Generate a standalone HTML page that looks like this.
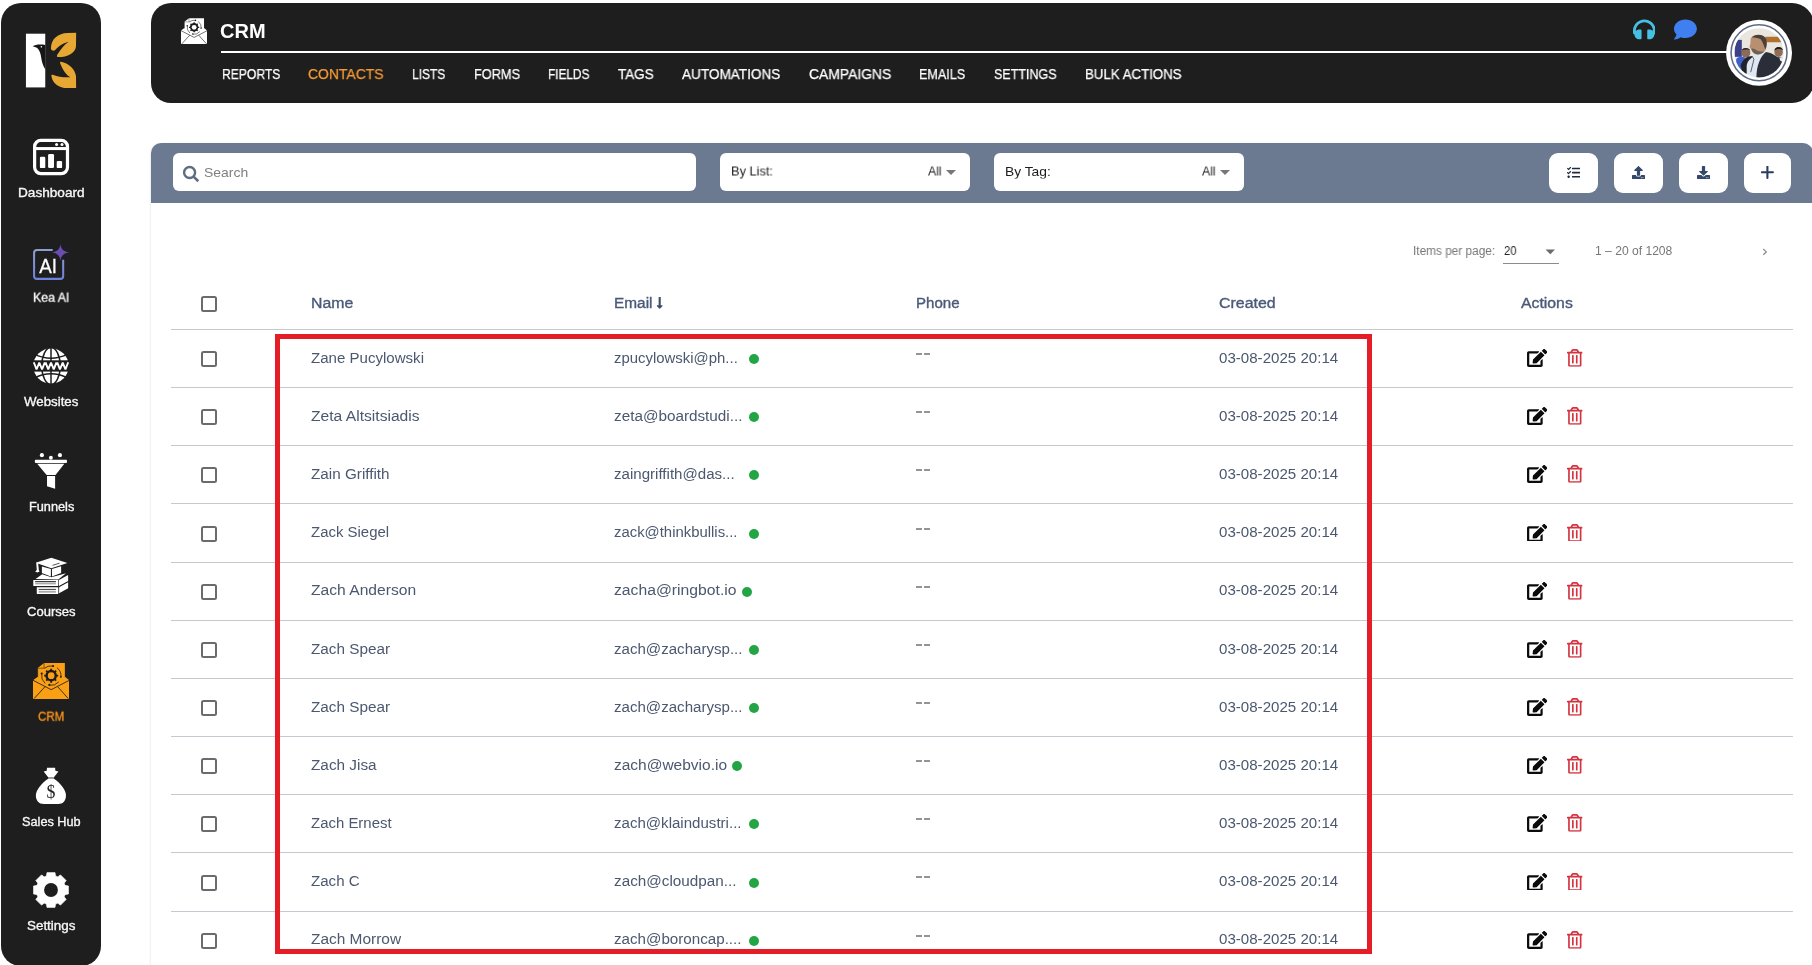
<!DOCTYPE html>
<html lang="en">
<head>
<meta charset="utf-8">
<title>CRM - Contacts</title>
<style>
*{box-sizing:border-box;margin:0;padding:0}
html,body{width:1812px;height:965px;overflow:hidden;background:#fff;font-family:"Liberation Sans",sans-serif}
body{position:relative}
.abs{position:absolute}
.t{position:absolute;white-space:nowrap;line-height:1;transform:translateY(-50%);transform-origin:0 50%;display:inline-block;will-change:transform}
#side{position:absolute;left:1px;top:3px;width:100px;height:963px;background:#1f1e1e;border-radius:20px}
#head{position:absolute;left:151px;top:3px;width:1663px;height:99.700px;background:#1f1e1e;border-radius:20px 22px 22px 20px}
#hline{position:absolute;left:221px;top:51px;width:1506px;height:2px;background:#fff}
#card{position:absolute;left:151px;top:143px;width:1665px;height:830px;background:#fff;border-radius:10px;box-shadow:-1px 0 2px rgba(0,0,0,.07)}
#tool{position:absolute;left:151px;top:143px;width:1662px;height:59.500px;background:#6b7a90;border-radius:10px 10px 0 0}
.inp{position:absolute;top:153px;height:38px;background:#fff;border-radius:6px}
.btn{position:absolute;top:153px;height:40px;width:49px;background:#fff;border-radius:9px}
.ln{position:absolute;left:171px;width:1622px;height:1px;background:#c7c9d1}
.cb{position:absolute;left:201px;width:16px;height:16px;border:2px solid #6b6b6b;border-radius:2.5px;background:#fff}
.dot{position:absolute;width:10px;height:10px;border-radius:50%;background:#23a546}
.ed{position:absolute;left:1526.7px;width:20.2px;height:17.9px;fill:#0b0b0b}
.tr{position:absolute;left:1567px;width:15.6px;height:17.8px;fill:#d4333f}
#red{position:absolute;left:275px;top:334px;width:1097px;height:620px;border:5px solid #e51d27}
.ds{position:absolute;width:6px;height:2px;background:#949494}
.hd{-webkit-text-stroke:0.35px #4a5a78}
.nv{-webkit-text-stroke:0.25px}
.sl{-webkit-text-stroke:0.35px}
.caret{position:absolute;width:0;height:0;border-left:5px solid transparent;border-right:5px solid transparent;border-top:5px solid #777}
</style>
</head>
<body>
<svg width="0" height="0" style="position:absolute">
<defs>
<symbol id="i-edit" viewBox="0 0 576 512"><path d="M402.6 83.2l90.2 90.2c3.8 3.8 3.8 10 0 13.800L274.400 405.600l-92.800 10.300c-12.400 1.400-22.900-9.100-21.500-21.500l10.300-92.800L388.800 83.200c3.800-3.800 10-3.800 13.800 0zm162-22.900l-48.800-48.800c-15.200-15.200-39.900-15.200-55.200 0l-35.400 35.400c-3.800 3.800-3.800 10 0 13.800l90.200 90.200c3.800 3.800 10 3.800 13.800 0l35.400-35.400c15.200-15.300 15.200-40 0-55.200zM384 346.200V448H64V128h229.800c3.200 0 6.200-1.300 8.500-3.500l40-40c7.600-7.600 2.200-20.500-8.500-20.500H48C21.500 64 0 85.500 0 112v352c0 26.500 21.500 48 48 48h352c26.500 0 48-21.500 48-48V306.200c0-10.700-12.900-16-20.500-8.500l-40 40c-2.200 2.300-3.500 5.300-3.500 8.500z"/></symbol>
<symbol id="i-trash" viewBox="0 0 448 512"><path d="M268 416h24a12 12 0 0 0 12-12V188a12 12 0 0 0-12-12h-24a12 12 0 0 0-12 12v216a12 12 0 0 0 12 12zM432 80h-82.410l-34-56.700A48 48 0 0 0 274.410 0H173.590a48 48 0 0 0-41.160 23.300L98.410 80H16A16 16 0 0 0 0 96v16a16 16 0 0 0 16 16h16v336a48 48 0 0 0 48 48h288a48 48 0 0 0 48-48V128h16a16 16 0 0 0 16-16V96a16 16 0 0 0-16-16zM171.840 50.910A6 6 0 0 1 177 48h94a6 6 0 0 1 5.150 2.910L293.610 80H154.390zM368 464H80V128h288zm-212-48h24a12 12 0 0 0 12-12V188a12 12 0 0 0-12-12h-24a12 12 0 0 0-12 12v216a12 12 0 0 0 12 12z"/></symbol>
<g id="i-crm">
<path fill="currentColor" d="M212 240 L330 146 H716 V400 L800 465 V815 H125 V465 L212 400Z"/>
<g stroke="#1f1e1e" stroke-width="16" fill="none" stroke-linecap="round">
<path d="M130 468 L462 640 L796 468"/>
<path d="M150 800 L345 588"/><path d="M775 800 L585 588"/>
<path d="M212 400 V242 L330 242 V150" stroke-width="10"/>
</g>
<circle cx="462" cy="380" r="108" fill="#1f1e1e"/>
<g stroke="#1f1e1e" stroke-width="34" stroke-linecap="butt">
<path d="M462 250 V510 M332 380 H592 M370 288 L554 472 M554 288 L370 472"/>
</g>
<circle cx="462" cy="380" r="62" fill="currentColor"/>
<g stroke="#1f1e1e" stroke-width="15" fill="none" stroke-linecap="round">
<path d="M340 240 A185 185 0 0 1 480 200"/>
<path d="M575 235 A185 185 0 0 1 645 400"/>
<path d="M600 500 A185 185 0 0 1 440 560"/>
<path d="M345 520 A185 185 0 0 1 285 350"/>
</g>
<g fill="#1f1e1e"><circle cx="497" cy="203" r="20"/><circle cx="287" cy="340" r="20"/><circle cx="428" cy="552" r="20"/><path d="M620 420 L665 410 L640 372Z"/></g>
</g>
</defs>
</svg>

<div id="side"></div>
<div id="head"></div>
<div id="hline"></div>
<div id="card"></div>
<div id="tool"></div>
<div class="inp" style="left:173px;width:523px"></div>
<div class="inp" style="left:719.500px;width:250.500px"></div>
<div class="inp" style="left:994px;width:250px"></div>
<div class="btn" style="left:1549px"></div>
<div class="btn" style="left:1614px"></div>
<div class="btn" style="left:1679px"></div>
<div class="btn" style="left:1744px;width:47px"></div>
<div class="caret" style="left:946px;top:170px"></div>
<div class="caret" style="left:1220px;top:170px"></div>

<!-- logo -->
<svg class="abs" style="left:16px;top:24px" width="70" height="72" viewBox="0 0 938 965">
<rect x="133" y="130" width="259" height="720" fill="#fff"/>
<path fill="#e7a833" d="M468 325 C470 195 565 122 690 119 L806 117 L804 300 C790 392 700 442 562 442 C540 440 548 418 562 398 C600 340 645 280 705 238 C620 258 562 308 522 352 C500 368 468 352 468 325Z"/>
<path fill="#e7a833" d="M474 692 C490 802 582 856 682 859 L806 859 L804 700 C792 600 702 520 602 505 C585 503 590 525 600 545 C630 620 672 682 728 713 C642 722 562 702 502 682 C486 676 472 678 474 692Z"/>
<path fill="#171616" d="M222 298 C262 278 305 268 394 280 L394 610 C362 565 346 505 336 442 C330 382 302 332 272 316 C252 306 236 302 222 298Z"/>
<circle cx="340" cy="306" r="11" fill="#e8e8e8"/>
</svg>
<!-- dashboard -->
<svg class="abs" style="left:26px;top:131px" width="50" height="52" viewBox="0 0 928 965">
<rect x="160" y="175" width="610" height="615" rx="115" fill="none" stroke="#fff" stroke-width="60"/>
<rect x="160" y="298" width="610" height="56" fill="#fff"/>
<circle cx="568" cy="252" r="28" fill="#fff"/><circle cx="668" cy="252" r="28" fill="#fff"/>
<rect x="258" y="480" width="100" height="208" rx="22" fill="#fff"/>
<rect x="410" y="425" width="110" height="263" rx="26" fill="#fff"/>
<rect x="570" y="555" width="100" height="133" rx="22" fill="#fff"/>
</svg>
<!-- kea ai -->
<svg class="abs" style="left:26px;top:236px;will-change:transform" width="50" height="52" viewBox="0 0 928 965">
<defs><linearGradient id="kg" x1="0" y1="0" x2="0" y2="1"><stop offset="0" stop-color="#8d9fcc"/><stop offset="1" stop-color="#6e82dc"/></linearGradient></defs>
<path d="M495 259 H205 Q150 259 150 315 V742 Q150 796 205 796 H636 Q690 796 690 742 V440" fill="none" stroke="url(#kg)" stroke-width="38"/>
<path fill="#6a4db4" d="M640 150 C652 250 700 292 800 305 C700 318 652 360 640 458 C628 360 580 318 480 305 C580 292 628 250 640 150Z"/>
<text x="410" y="685" font-family="Liberation Sans, sans-serif" font-size="385" font-weight="400" fill="#fff" stroke="#fff" stroke-width="5" text-anchor="middle" textLength="330" lengthAdjust="spacingAndGlyphs">AI</text>
</svg>
<!-- websites -->
<svg class="abs" style="left:33px;top:348px" width="36" height="36" viewBox="0 0 36 36">
<circle cx="18" cy="18" r="17.700" fill="#fff"/>
<g stroke="#1f1e1e" stroke-width="1.500" fill="none">
<line x1="18" y1="0" x2="18" y2="36"/>
<ellipse cx="18" cy="18" rx="9.200" ry="18.500"/>
<path d="M1 5.800 Q18 14.600 35 5.800"/>
<path d="M1 30.200 Q18 21.400 35 30.200"/>
</g>
<rect x="-2" y="12.300" width="40" height="11.300" fill="#1f1e1e"/>
<path d="M0.80 14.3 L3.55 21.4 L6.30 14.6 L9.05 21.4 L11.80 14.3 M12.50 14.3 L15.25 21.4 L18.00 14.6 L20.75 21.4 L23.50 14.3 M24.20 14.3 L26.95 21.4 L29.70 14.6 L32.45 21.4 L35.20 14.3" fill="none" stroke="#fff" stroke-width="1.9" stroke-linejoin="miter" stroke-miterlimit="2"/>
</svg>
<!-- funnels -->
<svg class="abs" style="left:26px;top:445px" width="50" height="52" viewBox="0 0 928 965">
<g fill="#fff">
<circle cx="295" cy="188" r="38"/><circle cx="630" cy="188" r="38"/><circle cx="462" cy="236" r="36"/>
<rect x="165" y="272" width="595" height="64" rx="14"/>
<path d="M208 350 H712 L548 556 H382Z"/>
<path d="M390 574 H540 V810 L390 765Z"/>
</g>
</svg>
<!-- courses -->
<svg class="abs" style="left:26px;top:550px" width="50" height="52" viewBox="0 0 928 965">
<g fill="#fff">
<path d="M180 238 L470 143 L768 240 L470 338Z"/>
<path d="M295 308 L462 352 V490 L295 425Z"/>
<path d="M482 352 L652 300 V425 L482 490Z"/>
<path d="M190 238 L225 238 L238 372 L252 400 L210 418 L170 400 L200 372Z"/>
<path d="M178 538 L300 452 L470 505 L742 430 L600 548Z"/>
<rect x="135" y="555" width="465" height="112" rx="8"/>
<path d="M612 555 L782 462 V575 L612 667Z"/>
<rect x="200" y="690" width="400" height="126" rx="8"/>
<path d="M615 690 L782 598 V712 L615 802Z"/>
</g>
<path d="M492 285 L622 245" stroke="#1f1e1e" stroke-width="14"/>
<rect x="170" y="578" width="385" height="16" fill="#1f1e1e"/>
<rect x="170" y="602" width="385" height="36" fill="#a9a9a9"/>
<rect x="235" y="722" width="320" height="16" fill="#1f1e1e"/>
<rect x="235" y="758" width="320" height="34" fill="#a9a9a9"/>
</svg>
<!-- crm -->
<svg class="abs" style="left:32.700px;top:662.800px;color:#fb9f14" width="36.400" height="36.100" viewBox="125 145 675 670"><use href="#i-crm"/></svg>
<!-- sales hub -->
<svg class="abs" style="left:26px;top:760px;will-change:transform" width="50" height="52" viewBox="0 0 928 965">
<path fill="#fff" d="M390 145 H540 L545 200 L602 214 L522 316 H408 L328 214 L385 200Z"/>
<rect x="410" y="320" width="112" height="20" fill="#bdbdbd"/>
<path fill="#fff" d="M418 345 H512 C640 430 745 560 742 660 C740 760 690 817 600 817 H330 C240 817 185 760 183 660 C182 560 290 430 418 345Z"/>
<text x="465" y="705" font-family="Liberation Serif, serif" font-size="330" fill="#1f1e1e" text-anchor="middle">$</text>
</svg>
<!-- settings -->
<svg class="abs" style="left:32.900px;top:871.750px" width="36" height="36" viewBox="0 0 37 37">
<path fill="#fff" d="M13.93 4.00 L14.38 0.67 L22.62 0.67 L23.07 4.00 L25.52 5.02 L28.20 2.98 L34.02 8.80 L31.98 11.48 L33.00 13.93 L36.33 14.38 L36.33 22.62 L33.00 23.07 L31.98 25.52 L34.02 28.20 L28.20 34.02 L25.52 31.98 L23.07 33.00 L22.62 36.33 L14.38 36.33 L13.93 33.00 L11.48 31.98 L8.80 34.02 L2.98 28.20 L5.02 25.52 L4.00 23.07 L0.67 22.62 L0.67 14.38 L4.00 13.93 L5.02 11.48 L2.98 8.80 L8.80 2.98 L11.48 5.02Z" stroke="#fff" stroke-width="0.800" stroke-linejoin="round"/>
<circle cx="18.500" cy="18.500" r="7.100" fill="#1f1e1e"/>
</svg>

<svg class="abs" style="left:180.900px;top:17.800px;color:#fff" width="26.300" height="26.400" viewBox="125 145 675 670"><use href="#i-crm"/></svg>
<svg class="abs" style="left:1632.600px;top:18.400px" width="22.800" height="22.800" viewBox="0 0 512 512"><path fill="#45bfe3" d="M256 32C114.520 32 0 146.496 0 288v48a32 32 0 0 0 17.689 28.622l14.383 7.191C34.083 431.903 83.421 480 144 480h24c13.255 0 24-10.745 24-24V280c0-13.255-10.745-24-24-24h-24c-31.342 0-59.671 12.879-80 33.627V288c0-105.869 86.131-192 192-192s192 86.131 192 192v1.627C427.671 268.879 399.342 256 368 256h-24c-13.255 0-24 10.745-24 24v176c0 13.255 10.745 24 24 24h24c60.579 0 109.917-48.098 111.928-108.187l14.382-7.191A32 32 0 0 0 512 336v-48c0-141.479-114.496-256-256-256z"/></svg>
<svg class="abs" style="left:1674.200px;top:18.300px" width="22.900" height="22.900" viewBox="0 0 512 512"><path fill="#3f7ff0" d="M256 32C114.600 32 0 125.100 0 240c0 49.600 21.400 95 57 130.700C44.500 421.100 2.700 466 2.200 466.500c-2.200 2.300-2.800 5.700-1.500 8.700S4.800 480 8 480c66.300 0 116-31.800 140.600-51.400 32.700 12.300 69 19.400 107.400 19.400 141.400 0 256-93.100 256-208S397.400 32 256 32z"/></svg>
<!-- avatar -->
<svg class="abs" style="left:1720px;top:14px" width="78" height="78" viewBox="0 0 965 965">
<defs><filter id="avb" x="-5%" y="-5%" width="110%" height="110%"><feGaussianBlur stdDeviation="7"/></filter><clipPath id="avc"><circle cx="483" cy="480" r="305"/></clipPath></defs>
<circle cx="483" cy="480" r="408" fill="#fff"/>
<circle cx="483" cy="480" r="346" fill="none" stroke="#5f6b84" stroke-width="19"/>
<g clip-path="url(#avc)"><g filter="url(#avb)">
<rect x="150" y="150" width="680" height="680" fill="#e9e6df"/>
<path d="M560 280 H800 V350 H570Z" fill="#b0702f"/>
<rect x="180" y="320" width="90" height="210" fill="#3a3f8a"/>
<path d="M200 560 C230 520 300 520 330 560 L340 700 H200Z" fill="#3b5fd0"/>
<ellipse cx="320" cy="480" rx="55" ry="60" fill="#8a6a58"/>
<path d="M270 450 C280 410 350 410 375 450 C350 435 300 435 270 450Z" fill="#2a2422"/>
<path d="M255 640 C275 560 340 520 400 520 L380 800 H300Z" fill="#20242c"/>
<ellipse cx="725" cy="470" rx="52" ry="62" fill="#8f6c55"/>
<path d="M672 455 C672 395 770 390 780 450 C750 425 700 425 672 455Z" fill="#1f1b1a"/>
<path d="M650 560 C700 520 770 530 800 560 V760 H650Z" fill="#23262e"/>
<path d="M735 545 L790 530 L780 580 L745 590Z" fill="#e8ecef"/>
<path d="M330 640 C340 560 420 510 520 480 L560 480 L470 790 H330Z" fill="#dfe7f0"/>
<path d="M395 520 L420 560 L380 720" stroke="#30405e" stroke-width="10" fill="none"/>
<path d="M450 790 C450 640 500 520 570 470 C640 480 720 520 760 600 L740 800Z" fill="#2a2f37"/>
<path d="M380 300 C420 240 540 250 570 310 C590 360 580 420 560 450 C540 490 500 500 460 500 C420 500 395 470 385 430 C360 420 365 390 375 370Z" fill="#b98f72"/>
<path d="M395 290 C430 240 545 245 572 310 C585 360 575 410 560 440 C545 400 530 340 500 310 C460 290 420 295 395 290Z" fill="#4a4038"/>
<path d="M385 430 C400 470 430 500 470 500 C500 500 530 485 548 460 C520 470 470 465 440 440 C420 430 400 425 385 430Z" fill="#6b6157"/>
</g></g>
</svg>

<!-- search icon -->
<svg class="abs" style="left:180px;top:163px" width="22" height="22" viewBox="0 0 22 22"><circle cx="9.600" cy="9.500" r="5.500" fill="none" stroke="#5d6d82" stroke-width="2.400"/><path d="M13.600 13.600 L18.300 18.200" stroke="#5d6d82" stroke-width="2.600" stroke-linecap="butt"/></svg>
<!-- tasks -->
<svg class="abs" style="left:1566.800px;top:166px" width="13.200" height="13.200" viewBox="0 0 512 512"><path fill="#1d2b3f" d="M139.610 35.500a12 12 0 0 0-17 0L58.930 98.810l-22.700-22.120a12 12 0 0 0-17 0L3.530 92.410a12 12 0 0 0 0 17l47.590 47.400a12.780 12.780 0 0 0 17.610 0l15.590-15.620L156.520 69a12.090 12.090 0 0 0 .09-17zm0 159.190a12 12 0 0 0-17 0l-63.680 63.720-22.700-22.100a12 12 0 0 0-17 0L3.530 252a12 12 0 0 0 0 17L51 316.500a12.770 12.770 0 0 0 17.600 0l15.700-15.690 72.200-72.220a12 12 0 0 0 .09-16.900zM64 368c-26.490 0-48.590 21.500-48.590 48S37.530 464 64 464a48 48 0 0 0 0-96zm432 16H208a16 16 0 0 0-16 16v32a16 16 0 0 0 16 16h288a16 16 0 0 0 16-16v-32a16 16 0 0 0-16-16zm0-320H208a16 16 0 0 0-16 16v32a16 16 0 0 0 16 16h288a16 16 0 0 0 16-16V80a16 16 0 0 0-16-16zm0 160H208a16 16 0 0 0-16 16v32a16 16 0 0 0 16 16h288a16 16 0 0 0 16-16v-32a16 16 0 0 0-16-16z"/></svg>
<!-- upload -->
<svg class="abs" style="left:1631.900px;top:166px" width="13" height="13" viewBox="0 0 512 512"><path fill="#33486a" d="M296 384h-80c-13.300 0-24-10.700-24-24V192h-87.700c-17.800 0-26.700-21.500-14.100-34.100L242.300 5.700c7.500-7.500 19.800-7.500 27.300 0l152.200 152.200c12.600 12.600 3.700 34.100-14.100 34.100H320v168c0 13.300-10.700 24-24 24zm216-8v112c0 13.300-10.700 24-24 24H24c-13.300 0-24-10.700-24-24V376c0-13.300 10.700-24 24-24h136v8c0 30.900 25.100 56 56 56h80c30.900 0 56-25.100 56-56v-8h136c13.300 0 24 10.700 24 24zm-124 88c0-11-9-20-20-20s-20 9-20 20 9 20 20 20 20-9 20-20zm64 0c0-11-9-20-20-20s-20 9-20 20 9 20 20 20 20-9 20-20z"/></svg>
<!-- download -->
<svg class="abs" style="left:1696.800px;top:166px" width="13" height="13" viewBox="0 0 512 512"><path fill="#33486a" d="M216 0h80c13.300 0 24 10.700 24 24v168h87.700c17.800 0 26.700 21.500 14.100 34.100L269.700 378.300c-7.500 7.500-19.800 7.500-27.300 0L90.100 226.100c-12.600-12.600-3.700-34.100 14.100-34.100H192V24c0-13.300 10.700-24 24-24zm296 376v112c0 13.300-10.700 24-24 24H24c-13.300 0-24-10.700-24-24V376c0-13.300 10.700-24 24-24h146.700l49 49c20.100 20.100 52.500 20.100 72.600 0l49-49H488c13.300 0 24 10.700 24 24zm-124 88c0-11-9-20-20-20s-20 9-20 20 9 20 20 20 20-9 20-20zm64 0c0-11-9-20-20-20s-20 9-20 20 9 20 20 20 20-9 20-20z"/></svg>
<!-- plus -->
<svg class="abs" style="left:1761px;top:166px" width="13" height="13" viewBox="0 0 13 13"><path d="M6.400 0.600 V11.900 M0.900 6.250 H11.900" stroke="#2a3d5e" stroke-width="2.100" stroke-linecap="round"/></svg>
<!-- paginator -->
<svg class="abs" style="left:1545px;top:249px" width="11" height="6" viewBox="0 0 11 6"><path d="M0.600 0.500 H10 L5.300 5.200Z" fill="#6a6a6a"/></svg>
<div class="abs" style="left:1503px;top:263px;width:56px;height:1px;background:#8c8c8c"></div>
<svg class="abs" style="left:1761px;top:247px" width="8" height="10" viewBox="0 0 8 10"><path d="M2.300 2 L5.300 4.900 L2.300 7.800" fill="none" stroke="#8a8a8a" stroke-width="1.200"/></svg>
<!-- sort arrow -->
<svg class="abs" style="left:655.500px;top:297px" width="7.400" height="11.800" viewBox="30 32 196 448"><path fill="#3f4d68" d="M168 345.941V44c0-6.627-5.373-12-12-12h-56c-6.627 0-12 5.373-12 12v301.941H41.941c-21.382 0-32.090 25.851-16.971 40.971l86.059 86.059c9.373 9.373 24.569 9.373 33.941 0l86.059-86.059c15.119-15.119 4.411-40.971-16.971-40.971H168z"/></svg>


<!-- table -->
<div class="cb" style="top:296px"></div>
<div class="ln" style="top:329px"></div>
<div class="cb" style="top:351.0px"></div>
<div class="dot" style="left:748.7px;top:354.2px"></div>
<svg class="ed" style="top:349.0px" viewBox="0 0 576 512"><use href="#i-edit"/></svg>
<svg class="tr" style="top:349.1px" viewBox="0 0 448 512"><use href="#i-trash"/></svg>
<div class="ds" style="left:916.2px;top:353px"></div><div class="ds" style="left:923.9px;width:6.4px;top:353px"></div>
<div class="cb" style="top:409.0px"></div>
<div class="dot" style="left:748.7px;top:412.2px"></div>
<svg class="ed" style="top:407.0px" viewBox="0 0 576 512"><use href="#i-edit"/></svg>
<svg class="tr" style="top:407.1px" viewBox="0 0 448 512"><use href="#i-trash"/></svg>
<div class="ds" style="left:916.2px;top:411px"></div><div class="ds" style="left:923.9px;width:6.4px;top:411px"></div>
<div class="ln" style="top:387px"></div>
<div class="cb" style="top:467.0px"></div>
<div class="dot" style="left:748.7px;top:470.2px"></div>
<svg class="ed" style="top:465.0px" viewBox="0 0 576 512"><use href="#i-edit"/></svg>
<svg class="tr" style="top:465.1px" viewBox="0 0 448 512"><use href="#i-trash"/></svg>
<div class="ds" style="left:916.2px;top:469px"></div><div class="ds" style="left:923.9px;width:6.4px;top:469px"></div>
<div class="ln" style="top:445px"></div>
<div class="cb" style="top:525.5px"></div>
<div class="dot" style="left:748.7px;top:528.7px"></div>
<svg class="ed" style="top:523.5px" viewBox="0 0 576 512"><use href="#i-edit"/></svg>
<svg class="tr" style="top:523.5px" viewBox="0 0 448 512"><use href="#i-trash"/></svg>
<div class="ds" style="left:916.2px;top:528px"></div><div class="ds" style="left:923.9px;width:6.4px;top:528px"></div>
<div class="ln" style="top:503px"></div>
<div class="cb" style="top:584.0px"></div>
<div class="dot" style="left:741.7px;top:587.2px"></div>
<svg class="ed" style="top:582.0px" viewBox="0 0 576 512"><use href="#i-edit"/></svg>
<svg class="tr" style="top:582.0px" viewBox="0 0 448 512"><use href="#i-trash"/></svg>
<div class="ds" style="left:916.2px;top:586px"></div><div class="ds" style="left:923.9px;width:6.4px;top:586px"></div>
<div class="ln" style="top:562px"></div>
<div class="cb" style="top:642.0px"></div>
<div class="dot" style="left:748.7px;top:645.2px"></div>
<svg class="ed" style="top:640.0px" viewBox="0 0 576 512"><use href="#i-edit"/></svg>
<svg class="tr" style="top:640.0px" viewBox="0 0 448 512"><use href="#i-trash"/></svg>
<div class="ds" style="left:916.2px;top:644px"></div><div class="ds" style="left:923.9px;width:6.4px;top:644px"></div>
<div class="ln" style="top:620px"></div>
<div class="cb" style="top:700.0px"></div>
<div class="dot" style="left:748.7px;top:703.2px"></div>
<svg class="ed" style="top:698.0px" viewBox="0 0 576 512"><use href="#i-edit"/></svg>
<svg class="tr" style="top:698.0px" viewBox="0 0 448 512"><use href="#i-trash"/></svg>
<div class="ds" style="left:916.2px;top:702px"></div><div class="ds" style="left:923.9px;width:6.4px;top:702px"></div>
<div class="ln" style="top:678px"></div>
<div class="cb" style="top:758.0px"></div>
<div class="dot" style="left:731.7px;top:761.2px"></div>
<svg class="ed" style="top:756.0px" viewBox="0 0 576 512"><use href="#i-edit"/></svg>
<svg class="tr" style="top:756.0px" viewBox="0 0 448 512"><use href="#i-trash"/></svg>
<div class="ds" style="left:916.2px;top:760px"></div><div class="ds" style="left:923.9px;width:6.4px;top:760px"></div>
<div class="ln" style="top:736px"></div>
<div class="cb" style="top:816.0px"></div>
<div class="dot" style="left:748.7px;top:819.2px"></div>
<svg class="ed" style="top:814.0px" viewBox="0 0 576 512"><use href="#i-edit"/></svg>
<svg class="tr" style="top:814.0px" viewBox="0 0 448 512"><use href="#i-trash"/></svg>
<div class="ds" style="left:916.2px;top:818px"></div><div class="ds" style="left:923.9px;width:6.4px;top:818px"></div>
<div class="ln" style="top:794px"></div>
<div class="cb" style="top:874.5px"></div>
<div class="dot" style="left:748.7px;top:877.7px"></div>
<svg class="ed" style="top:872.5px" viewBox="0 0 576 512"><use href="#i-edit"/></svg>
<svg class="tr" style="top:872.5px" viewBox="0 0 448 512"><use href="#i-trash"/></svg>
<div class="ds" style="left:916.2px;top:876px"></div><div class="ds" style="left:923.9px;width:6.4px;top:876px"></div>
<div class="ln" style="top:852px"></div>
<div class="cb" style="top:933.0px"></div>
<div class="dot" style="left:748.7px;top:936.2px"></div>
<svg class="ed" style="top:931.0px" viewBox="0 0 576 512"><use href="#i-edit"/></svg>
<svg class="tr" style="top:931.0px" viewBox="0 0 448 512"><use href="#i-trash"/></svg>
<div class="ds" style="left:916.2px;top:935px"></div><div class="ds" style="left:923.9px;width:6.4px;top:935px"></div>
<div class="ln" style="top:911px"></div>
<span class="t sl" style="left:17.8px;top:192.6px;font-size:12.5px;font-weight:400;color:#f7f7f7;transform:translateY(-50%) scaleX(1.0890);">Dashboard</span>
<span class="t sl" style="left:32.9px;top:298.3px;font-size:12.5px;font-weight:400;color:#f7f7f7;transform:translateY(-50%) scaleX(0.9880);">Kea AI</span>
<span class="t sl" style="left:24.0px;top:401.8px;font-size:12.5px;font-weight:400;color:#f7f7f7;transform:translateY(-50%) scaleX(1.0628);">Websites</span>
<span class="t sl" style="left:28.7px;top:506.7px;font-size:12.5px;font-weight:400;color:#f7f7f7;transform:translateY(-50%) scaleX(1.0183);">Funnels</span>
<span class="t sl" style="left:26.8px;top:612.3px;font-size:12.5px;font-weight:400;color:#f7f7f7;transform:translateY(-50%) scaleX(1.0441);">Courses</span>
<span class="t sl" style="left:37.7px;top:716.8px;font-size:12.5px;font-weight:400;color:#f5921e;transform:translateY(-50%) scaleX(0.9238);">CRM</span>
<span class="t sl" style="left:21.8px;top:822.3px;font-size:12.5px;font-weight:400;color:#f7f7f7;transform:translateY(-50%) scaleX(1.0176);">Sales Hub</span>
<span class="t sl" style="left:27.0px;top:925.6px;font-size:12.5px;font-weight:400;color:#f7f7f7;transform:translateY(-50%) scaleX(1.0715);">Settings</span>
<span class="t " style="left:219.5px;top:31.0px;font-size:20px;font-weight:700;color:#fff;transform:translateY(-50%) scaleX(0.9902);">CRM</span>
<span class="t nv" style="left:221.6px;top:73.9px;font-size:14px;font-weight:400;color:#fff;transform:translateY(-50%) scaleX(0.8660);">REPORTS</span>
<span class="t nv" style="left:308.2px;top:73.9px;font-size:14px;font-weight:400;color:#f39a36;transform:translateY(-50%) scaleX(0.9951);">CONTACTS</span>
<span class="t nv" style="left:411.7px;top:73.9px;font-size:14px;font-weight:400;color:#fff;transform:translateY(-50%) scaleX(0.8559);">LISTS</span>
<span class="t nv" style="left:473.5px;top:73.9px;font-size:14px;font-weight:400;color:#fff;transform:translateY(-50%) scaleX(0.9117);">FORMS</span>
<span class="t nv" style="left:548.3px;top:73.9px;font-size:14px;font-weight:400;color:#fff;transform:translateY(-50%) scaleX(0.8446);">FIELDS</span>
<span class="t nv" style="left:617.8px;top:73.9px;font-size:14px;font-weight:400;color:#fff;transform:translateY(-50%) scaleX(0.9601);">TAGS</span>
<span class="t nv" style="left:682.3px;top:73.9px;font-size:14px;font-weight:400;color:#fff;transform:translateY(-50%) scaleX(0.9695);">AUTOMATIONS</span>
<span class="t nv" style="left:808.9px;top:73.9px;font-size:14px;font-weight:400;color:#fff;transform:translateY(-50%) scaleX(0.9905);">CAMPAIGNS</span>
<span class="t nv" style="left:919.2px;top:73.9px;font-size:14px;font-weight:400;color:#fff;transform:translateY(-50%) scaleX(0.8995);">EMAILS</span>
<span class="t nv" style="left:993.5px;top:73.9px;font-size:14px;font-weight:400;color:#fff;transform:translateY(-50%) scaleX(0.8927);">SETTINGS</span>
<span class="t nv" style="left:1084.7px;top:73.9px;font-size:14px;font-weight:400;color:#fff;transform:translateY(-50%) scaleX(0.9478);">BULK ACTIONS</span>
<span class="t " style="left:203.8px;top:172.0px;font-size:13px;font-weight:400;color:#808080;transform:translateY(-50%) scaleX(1.0727);">Search</span>
<span class="t " style="left:730.5px;top:170.8px;font-size:13px;font-weight:400;color:#1d1d1d;transform:translateY(-50%) scaleX(0.9830);">By List:</span>
<span class="t " style="left:927.8px;top:170.8px;font-size:13px;font-weight:400;color:#1d1d1d;transform:translateY(-50%) scaleX(0.9410);">All</span>
<span class="t " style="left:1004.5px;top:170.8px;font-size:13px;font-weight:400;color:#1d1d1d;transform:translateY(-50%) scaleX(1.0620);">By Tag:</span>
<span class="t " style="left:1201.8px;top:170.8px;font-size:13px;font-weight:400;color:#1d1d1d;transform:translateY(-50%) scaleX(0.9410);">All</span>
<span class="t " style="left:1412.5px;top:250.5px;font-size:12px;font-weight:400;color:#777;transform:translateY(-50%) scaleX(0.9857);">Items per page:</span>
<span class="t " style="left:1503.7px;top:250.5px;font-size:12px;font-weight:400;color:#222;transform:translateY(-50%) scaleX(0.9357);">20</span>
<span class="t " style="left:1595.4px;top:250.5px;font-size:12px;font-weight:400;color:#777;transform:translateY(-50%) scaleX(1.0074);">1 – 20 of 1208</span>
<span class="t hd" style="left:311.4px;top:303.0px;font-size:14px;font-weight:400;color:#4a5a78;transform:translateY(-50%) scaleX(1.1296);">Name</span>
<span class="t hd" style="left:613.5px;top:303.0px;font-size:14px;font-weight:400;color:#4a5a78;transform:translateY(-50%) scaleX(1.0995);">Email</span>
<span class="t hd" style="left:916.0px;top:303.0px;font-size:14px;font-weight:400;color:#4a5a78;transform:translateY(-50%) scaleX(1.0770);">Phone</span>
<span class="t hd" style="left:1218.7px;top:303.0px;font-size:14px;font-weight:400;color:#4a5a78;transform:translateY(-50%) scaleX(1.1363);">Created</span>
<span class="t hd" style="left:1521.2px;top:303.0px;font-size:14px;font-weight:400;color:#4a5a78;transform:translateY(-50%) scaleX(1.1280);">Actions</span>
<span class="t " style="left:311.4px;top:357.8px;font-size:14px;font-weight:400;color:#4b586f;transform:translateY(-50%) scaleX(1.0757);">Zane Pucylowski</span>
<span class="t " style="left:613.5px;top:357.8px;font-size:14px;font-weight:400;color:#4b586f;transform:translateY(-50%) scaleX(1.0658);">zpucylowski@ph...</span>
<span class="t " style="left:1218.8px;top:357.8px;font-size:14px;font-weight:400;color:#4b586f;transform:translateY(-50%) scaleX(1.0783);">03-08-2025 20:14</span>
<span class="t " style="left:311.4px;top:415.9px;font-size:14px;font-weight:400;color:#4b586f;transform:translateY(-50%) scaleX(1.1165);">Zeta Altsitsiadis</span>
<span class="t " style="left:613.5px;top:415.9px;font-size:14px;font-weight:400;color:#4b586f;transform:translateY(-50%) scaleX(1.0914);">zeta@boardstudi...</span>
<span class="t " style="left:1218.8px;top:415.9px;font-size:14px;font-weight:400;color:#4b586f;transform:translateY(-50%) scaleX(1.0783);">03-08-2025 20:14</span>
<span class="t " style="left:311.4px;top:474.1px;font-size:14px;font-weight:400;color:#4b586f;transform:translateY(-50%) scaleX(1.0900);">Zain Griffith</span>
<span class="t " style="left:613.5px;top:474.1px;font-size:14px;font-weight:400;color:#4b586f;transform:translateY(-50%) scaleX(1.0775);">zaingriffith@das...</span>
<span class="t " style="left:1218.8px;top:474.1px;font-size:14px;font-weight:400;color:#4b586f;transform:translateY(-50%) scaleX(1.0783);">03-08-2025 20:14</span>
<span class="t " style="left:311.4px;top:532.2px;font-size:14px;font-weight:400;color:#4b586f;transform:translateY(-50%) scaleX(1.0676);">Zack Siegel</span>
<span class="t " style="left:613.5px;top:532.2px;font-size:14px;font-weight:400;color:#4b586f;transform:translateY(-50%) scaleX(1.0632);">zack@thinkbullis...</span>
<span class="t " style="left:1218.8px;top:532.2px;font-size:14px;font-weight:400;color:#4b586f;transform:translateY(-50%) scaleX(1.0783);">03-08-2025 20:14</span>
<span class="t " style="left:311.4px;top:590.4px;font-size:14px;font-weight:400;color:#4b586f;transform:translateY(-50%) scaleX(1.1160);">Zach Anderson</span>
<span class="t " style="left:613.5px;top:590.4px;font-size:14px;font-weight:400;color:#4b586f;transform:translateY(-50%) scaleX(1.1221);">zacha@ringbot.io</span>
<span class="t " style="left:1218.8px;top:590.4px;font-size:14px;font-weight:400;color:#4b586f;transform:translateY(-50%) scaleX(1.0783);">03-08-2025 20:14</span>
<span class="t " style="left:311.4px;top:648.5px;font-size:14px;font-weight:400;color:#4b586f;transform:translateY(-50%) scaleX(1.0929);">Zach Spear</span>
<span class="t " style="left:613.5px;top:648.5px;font-size:14px;font-weight:400;color:#4b586f;transform:translateY(-50%) scaleX(1.0774);">zach@zacharysp...</span>
<span class="t " style="left:1218.8px;top:648.5px;font-size:14px;font-weight:400;color:#4b586f;transform:translateY(-50%) scaleX(1.0783);">03-08-2025 20:14</span>
<span class="t " style="left:311.4px;top:706.6px;font-size:14px;font-weight:400;color:#4b586f;transform:translateY(-50%) scaleX(1.0929);">Zach Spear</span>
<span class="t " style="left:613.5px;top:706.6px;font-size:14px;font-weight:400;color:#4b586f;transform:translateY(-50%) scaleX(1.0774);">zach@zacharysp...</span>
<span class="t " style="left:1218.8px;top:706.6px;font-size:14px;font-weight:400;color:#4b586f;transform:translateY(-50%) scaleX(1.0783);">03-08-2025 20:14</span>
<span class="t " style="left:311.4px;top:764.8px;font-size:14px;font-weight:400;color:#4b586f;transform:translateY(-50%) scaleX(1.0948);">Zach Jisa</span>
<span class="t " style="left:613.5px;top:764.8px;font-size:14px;font-weight:400;color:#4b586f;transform:translateY(-50%) scaleX(1.1061);">zach@webvio.io</span>
<span class="t " style="left:1218.8px;top:764.8px;font-size:14px;font-weight:400;color:#4b586f;transform:translateY(-50%) scaleX(1.0783);">03-08-2025 20:14</span>
<span class="t " style="left:311.4px;top:822.9px;font-size:14px;font-weight:400;color:#4b586f;transform:translateY(-50%) scaleX(1.0678);">Zach Ernest</span>
<span class="t " style="left:613.5px;top:822.9px;font-size:14px;font-weight:400;color:#4b586f;transform:translateY(-50%) scaleX(1.0761);">zach@klaindustri...</span>
<span class="t " style="left:1218.8px;top:822.9px;font-size:14px;font-weight:400;color:#4b586f;transform:translateY(-50%) scaleX(1.0783);">03-08-2025 20:14</span>
<span class="t " style="left:311.4px;top:881.1px;font-size:14px;font-weight:400;color:#4b586f;transform:translateY(-50%) scaleX(1.0770);">Zach C</span>
<span class="t " style="left:613.5px;top:881.1px;font-size:14px;font-weight:400;color:#4b586f;transform:translateY(-50%) scaleX(1.0910);">zach@cloudpan...</span>
<span class="t " style="left:1218.8px;top:881.1px;font-size:14px;font-weight:400;color:#4b586f;transform:translateY(-50%) scaleX(1.0783);">03-08-2025 20:14</span>
<span class="t " style="left:311.4px;top:939.2px;font-size:14px;font-weight:400;color:#4b586f;transform:translateY(-50%) scaleX(1.1030);">Zach Morrow</span>
<span class="t " style="left:613.5px;top:939.2px;font-size:14px;font-weight:400;color:#4b586f;transform:translateY(-50%) scaleX(1.0829);">zach@boroncap....</span>
<span class="t " style="left:1218.8px;top:939.2px;font-size:14px;font-weight:400;color:#4b586f;transform:translateY(-50%) scaleX(1.0783);">03-08-2025 20:14</span>
<div id="red"></div>
</body>
</html>
